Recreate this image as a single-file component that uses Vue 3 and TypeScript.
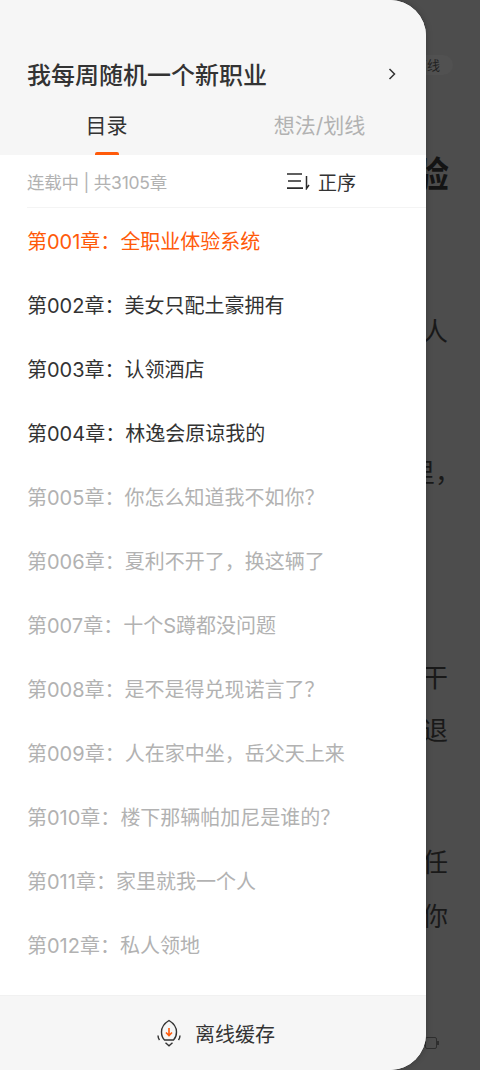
<script setup lang="ts">
interface Chapter { no: string; title: string; state: 'current' | 'cached' | 'locked' }
const chapters: Chapter[] = [
  { no: '第001章：', title: '全职业体验系统', state: 'current' },
  { no: '第002章：', title: '美女只配土豪拥有', state: 'cached' },
  { no: '第003章：', title: '认领酒店', state: 'cached' },
  { no: '第004章：', title: '林逸会原谅我的', state: 'cached' },
  { no: '第005章：', title: '你怎么知道我不如你？', state: 'locked' },
  { no: '第006章：', title: '夏利不开了，换这辆了', state: 'locked' },
  { no: '第007章：', title: '十个S蹲都没问题', state: 'locked' },
  { no: '第008章：', title: '是不是得兑现诺言了？', state: 'locked' },
  { no: '第009章：', title: '人在家中坐，岳父天上来', state: 'locked' },
  { no: '第010章：', title: '楼下那辆帕加尼是谁的？', state: 'locked' },
  { no: '第011章：', title: '家里就我一个人', state: 'locked' },
  { no: '第012章：', title: '私人领地', state: 'locked' },
]
</script>

<template>
  <div class="screen">
    <div class="reader">
      <div class="pill">离线</div>
      <div class="heading">体验</div>
      <p class="line first">一个人</p>
      <p class="line second">家里，</p>
      <p class="line third">能干</p>
      <p class="line">不退</p>
      <p class="line fourth">担任</p>
      <p class="line fifth">是你</p>
      <div class="battery"><span></span></div>
    </div>

    <aside class="drawer">
      <header class="head">
        <div class="book">
          <h1>我每周随机一个新职业</h1>
          <svg class="chev" width="10" height="14" viewBox="0 0 10 14">
            <path d="M2.500 2 L7.500 7 L2.500 12" fill="none" stroke="#333" stroke-width="1.500" />
          </svg>
        </div>
        <nav class="tabs">
          <div class="tab on">目录<i></i></div>
          <div class="tab">想法/划线</div>
        </nav>
      </header>

      <section class="meta">
        <span class="count">连载中 | 共3105章</span>
        <span class="sort">
          <svg width="24" height="18" viewBox="0 0 24 18">
            <path d="M1 2h15M2 9h13M1 16.200h16" fill="none" stroke="#2b2b2b" stroke-width="1.700" />
            <path d="M20.500 4v12.500L23 13" fill="none" stroke="#2b2b2b" stroke-width="1.500" />
          </svg>
          正序
        </span>
      </section>

      <ol class="list">
        <li v-for="c in chapters" :key="c.no" :class="c.state">
          <span>{{ c.no }}</span><span>{{ c.title }}</span>
        </li>
      </ol>

      <footer class="foot">
        <svg width="24" height="28" viewBox="0 0 24 28">
          <path d="M12 1.500C7 4.500 4.500 9 4.500 13C4.500 16 5.500 19 7.500 21H16.500C18.500 19 19.500 16 19.500 13C19.500 9 17 4.500 12 1.500Z" fill="none" stroke="#333" stroke-width="1.400" />
          <path d="M1 16.500C1 18 1.500 19.500 2.500 21M23 16.500C23 18 22.500 19.500 21.500 21" fill="none" stroke="#333" stroke-width="1.400" />
          <path d="M8.500 23.800L12 26.800L15.500 23.800" fill="none" stroke="#333" stroke-width="1.400" />
          <path d="M12 9V16.500M9 13.500L12 16.500L15 13.500" fill="none" stroke="#ff5a0a" stroke-width="1.600" />
        </svg>
        <span>离线缓存</span>
      </footer>
    </aside>
  </div>
</template>

<style scoped>
.screen {
  position: relative;
  width: 480px;
  height: 1070px;
  overflow: hidden;
  background: #4d4d4d;
  font-family: Inter, "Noto Sans CJK SC", sans-serif;
}
.reader {
  display: flex;
  flex-direction: column;
  align-items: flex-end;
  height: 100%;
  padding: 55px 32px 0 0;
  box-sizing: border-box;
  color: #191919;
}
.pill {
  height: 20px;
  line-height: 20px;
  margin-right: -5px;
  padding: 0 13px 0 8px;
  border-radius: 10px;
  background: #515151;
  font-size: 13px;
  color: #222;
}
.heading {
  margin-top: 77px;
  line-height: 46px;
  font-size: 36px;
  font-weight: 700;
  color: #141414;
  margin-right: -1px;
}
.line {
  margin: 0;
  font-size: 26px;
  line-height: 53px;
}
.first { margin-top: 107px; }
.second { margin-top: 88px; margin-right: -13px; }
.third { margin-top: 152px; }
.fourth { margin-top: 79px; }
.fifth { margin-top: 1px; }
.battery {
  margin-top: 94px;
  margin-right: 11px;
  width: 10px;
  height: 10px;
  border: 1px solid #2e2e2e;
  border-radius: 2px;
  position: relative;
}
.battery span {
  position: absolute;
  right: -3px;
  top: 3px;
  width: 2px;
  height: 4px;
  background: #2e2e2e;
}
.drawer {
  position: absolute;
  left: 0;
  top: 0;
  bottom: 0;
  width: 426px;
  display: flex;
  flex-direction: column;
  overflow: hidden;
  background: #fff;
  border-radius: 0 36px 36px 0;
  box-shadow: 0 0 6px rgba(0, 0, 0, 0.25);
}
.head {
  height: 155px;
  flex: none;
  background: #f6f6f6;
  display: flex;
  flex-direction: column;
  padding-top: 59px;
  box-sizing: border-box;
}
.book {
  height: 34px;
  display: flex;
  align-items: center;
  justify-content: space-between;
  padding: 0 29px 0 27px;
}
h1 {
  margin: 0;
  font-size: 24px;
  line-height: 34px;
  font-weight: 500;
  color: #333;
}
.chev { margin-top: -5px; }
.tabs {
  display: grid;
  grid-template-columns: 1fr 1fr;
  flex: 1;
}
.tab {
  position: relative;
  padding-top: 15px;
  text-align: center;
  font-size: 21px;
  line-height: 36px;
  color: #b2b2b2;
}
.tab.on { color: #333; }
.tab i {
  position: absolute;
  left: 50%;
  bottom: 0;
  width: 24px;
  height: 3px;
  margin-left: -12px;
  border-radius: 2px 2px 0 0;
  background: #ff5a0a;
}
.meta {
  flex: none;
  height: 53px;
  margin-left: 27px;
  padding-right: 70px;
  box-sizing: border-box;
  display: flex;
  align-items: center;
  justify-content: space-between;
  border-bottom: 1px solid #f4f4f4;
}
.count {
  font-size: 17.500px;
  letter-spacing: -0.23px;
  color: #b2b2b2;
}
.sort {
  display: flex;
  align-items: center;
  gap: 8px;
  font-size: 19px;
  color: #333;
}
.list {
  flex: 1;
  margin: 0;
  padding: 2px 0 0 27px;
  list-style: none;
}
.list li {
  height: 64px;
  line-height: 64px;
  font-size: 20px;
  white-space: nowrap;
  color: #b2b2b2;
}
.list li.current { color: #ff5a0a; }
.list li.cached { color: #333; }
.foot {
  flex: none;
  height: 75px;
  box-sizing: border-box;
  display: flex;
  align-items: center;
  justify-content: center;
  gap: 14px;
  padding-left: 6px;
  background: #f6f6f6;
  border-top: 1px solid #f1f1f1;
  font-size: 20px;
  color: #333;
}
</style>
